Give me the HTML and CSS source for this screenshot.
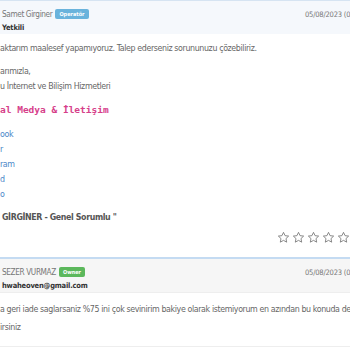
FILE: index.html
```html
<!DOCTYPE html>
<html lang="tr">
<head>
<meta charset="UTF-8" />
<title>Destek Talebi</title>
<link rel="stylesheet" href="styles.css">
</head>
<body>

<div class="reply staff">
  <div class="reply-head">
    <div class="who">
      <div class="name">Samet Girginer <span class="badge badge-blue">Operatör</span></div>
      <div class="role">Yetkili</div>
    </div>
    <div class="date">05/08/2023 (09:41)</div>
  </div>
  <div class="reply-body">
    <p>aktarım maalesef yapamıyoruz. Talep ederseniz sorununuzu çözebiliriz.</p>
    <p>arımızla,<br>u İnternet ve Bilişim Hizmetleri</p>
    <p class="code">al Medya &amp; İletişim</p>
    <ul class="links">
      <li><a href="#">ook</a></li>
      <li><a href="#">r</a></li>
      <li><a href="#">ram</a></li>
      <li><a href="#">d</a></li>
      <li><a href="#">o</a></li>
    </ul>
    <p class="sign">GİRGİNER - Genel Sorumlu "</p>
    <div class="stars">
      <svg viewBox="0 0 24 24"><path d="M12 2.5l2.9 6.1 6.6.8-4.9 4.6 1.3 6.6L12 17.3l-5.9 3.3 1.3-6.6-4.9-4.6 6.6-.8z"/></svg>
      <svg viewBox="0 0 24 24"><path d="M12 2.5l2.9 6.1 6.6.8-4.9 4.6 1.3 6.6L12 17.3l-5.9 3.3 1.3-6.6-4.9-4.6 6.6-.8z"/></svg>
      <svg viewBox="0 0 24 24"><path d="M12 2.5l2.9 6.1 6.6.8-4.9 4.6 1.3 6.6L12 17.3l-5.9 3.3 1.3-6.6-4.9-4.6 6.6-.8z"/></svg>
      <svg viewBox="0 0 24 24"><path d="M12 2.5l2.9 6.1 6.6.8-4.9 4.6 1.3 6.6L12 17.3l-5.9 3.3 1.3-6.6-4.9-4.6 6.6-.8z"/></svg>
      <svg viewBox="0 0 24 24"><path d="M12 2.5l2.9 6.1 6.6.8-4.9 4.6 1.3 6.6L12 17.3l-5.9 3.3 1.3-6.6-4.9-4.6 6.6-.8z"/></svg>
    </div>
  </div>
</div>

<div class="reply customer">
  <div class="reply-head">
    <div class="who">
      <div class="name">SEZER VURMAZ <span class="badge badge-green">Owner</span></div>
      <div class="role">hwaheoven@gmail.com</div>
    </div>
    <div class="date">05/08/2023 (09:12)</div>
  </div>
  <div class="reply-body">
    <p>a geri iade saglarsaniz %75 ini çok sevinirim bakiye olarak istemiyorum en azından bu konuda destek<br>irsiniz</p>
  </div>
</div>

</body>
</html>
```

FILE: styles.css
```css
html {
  overflow: hidden;
}
body {
  margin: 0;
  width: 362px;
  overflow: hidden;
  background: #fff;
  font-family: "Liberation Sans Narrow", "DejaVu Sans Condensed", "Liberation Sans", sans-serif;
  font-size: 8.8px;
  letter-spacing: -0.38px;
  color: #666;
}
.reply {
  white-space: nowrap;
}
.reply.staff {
  border-top: 1px solid #d6e4f2;
}
.reply.customer {
  border-top: 2px solid #c4dbf2;
  border-bottom: 1px solid #eee;
}
.reply-head {
  display: grid;
  grid-template-columns: 303px auto;
  padding: 7px 2px 5px;
  height: 21px;
}
.staff .reply-head {
  background: #f5f8fc;
}
.customer .reply-head {
  background: #f6f6f6;
  border-bottom: 1px solid #eee;
}
.name {
  display: flex;
  align-items: center;
  gap: 3px;
  color: #777;
  font-size: 8.2px;
  line-height: 12px;
}
.badge {
  font-size: 5.5px;
  letter-spacing: 0;
  line-height: 10px;
  padding: 0 4px;
  border-radius: 2px;
  color: #fff;
  font-weight: bold;
}
.badge-blue {
  background: #6ab3dc;
}
.badge-green {
  background: #5cb85c;
}
.role {
  margin-top: 3px;
  font-size: 7.5px;
  letter-spacing: -0.2px;
  font-weight: bold;
  color: #333;
}
.date {
  font-size: 7.5px;
  letter-spacing: -0.2px;
  color: #777;
  padding-top: 2px;
}
.reply-body {
  padding: 7px 0 13px;
}
.reply-body p {
  margin: 0 0 8px;
  line-height: 15px;
}
.reply-body .code {
  font-family: "DejaVu Sans Mono", monospace;
  font-weight: bold;
  font-size: 9.5px;
  letter-spacing: 0;
  color: #d6408a;
  margin-bottom: 10px;
}
.links {
  list-style: none;
  margin: 0 0 8px;
  padding: 0;
}
.links li {
  line-height: 15px;
}
.links a {
  color: #4a86c8;
  text-decoration: none;
}
.reply-body .sign {
  font-weight: bold;
  color: #555;
  padding-left: 2px;
  margin-bottom: 6px;
}
.stars {
  display: flex;
  justify-content: flex-end;
  gap: 2px;
  padding-right: 12px;
}
.stars svg {
  width: 13px;
  height: 13px;
  fill: none;
  stroke: #777;
  stroke-width: 1.6;
  stroke-linejoin: round;
}
.customer .reply-body {
  padding: 7px 0 10px;
}
.customer .reply-body p {
  margin: 0;
  line-height: 18px;
}
```
